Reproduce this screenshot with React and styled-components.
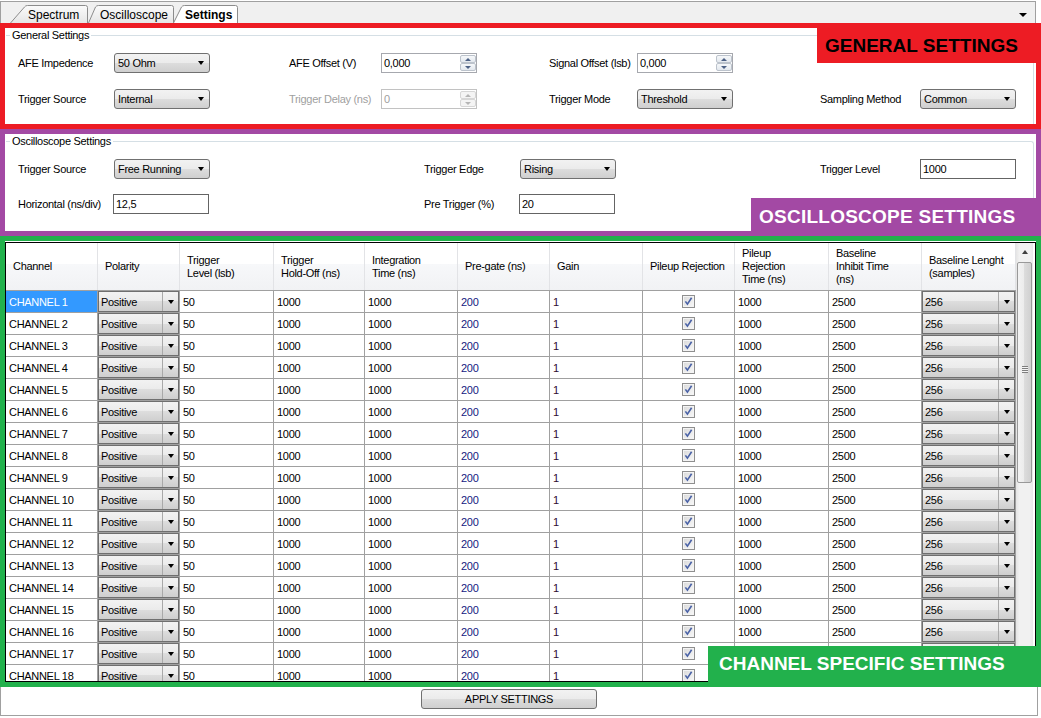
import React from "react";
import styled, { createGlobalStyle } from "styled-components";

const FONT = `"Liberation Sans", Arial, Helvetica, sans-serif`;
const VISTA = "linear-gradient(#f2f2f2 0%, #ebebeb 50%, #dddddd 50%, #cfcfcf 100%)";

const GlobalStyle = createGlobalStyle`
  *, *::before, *::after { box-sizing: border-box; }
  html, body { margin: 0; padding: 0; background: #ffffff; }
  body { font-family: ${FONT}; font-size: 11px; letter-spacing: -0.3px; color: #000; }
`;

const Page = styled.div`
  width: 1041px;
  height: 718px;
  display: flex;
  flex-direction: column;
  overflow: hidden;
  background: #fff;
`;

/* ---------- tab strip ---------- */
const TabStrip = styled.div`
  margin-top: 1px;
  width: 1036px;
  height: 22px;
  border: 1px solid #a0a0a0;
  border-bottom: none;
  background: #f0f0f0;
  display: flex;
  align-items: flex-end;
  padding-left: 9px;
`;

const TabItem = styled.div`
  position: relative;
  z-index: ${(p) => (p.$active ? 3 : 1)};
  width: ${(p) => p.$w}px;
  height: 18px;
  margin-left: ${(p) => p.$ml || 0}px;
  padding-left: ${(p) => p.$pl}px;
  padding-top: 1px;
  display: flex;
  align-items: center;
  font-size: 12px;
  letter-spacing: 0;
  font-weight: ${(p) => (p.$active ? 700 : 400)};
  white-space: nowrap;
`;

const TabShape = styled.svg`
  position: absolute;
  left: 0;
  top: 0;
  z-index: -1;
`;

const MenuArrow = styled.span`
  align-self: flex-start;
  margin: 11px 8px 0 auto;
  width: 0;
  height: 0;
  border-left: 4px solid transparent;
  border-right: 4px solid transparent;
  border-top: 4px solid #000;
`;

function Tab({ label, w, slant, pl, ml, active, id }) {
  const H = 18;
  const d = `M0.5,${H} L${slant - 1.5},2 Q${slant - 0.5},0.5 ${slant + 1.5},0.5 L${w - 2.5},0.5 Q${w - 0.5},0.5 ${w - 0.5},2.5 L${w - 0.5},${H}`;
  return (
    <TabItem $w={w} $pl={pl} $ml={ml} $active={active}>
      <TabShape width={w} height={H} viewBox={`0 0 ${w} ${H}`}>
        <defs>
          <linearGradient id={id} x1="0" y1="0" x2="0" y2="1">
            <stop offset="0" stopColor={active ? "#ffffff" : "#fbfbfb"} />
            <stop offset="1" stopColor={active ? "#ffffff" : "#e6e6e6"} />
          </linearGradient>
        </defs>
        <path d={d} fill={`url(#${id})`} stroke="#8c8c8c" strokeWidth="1" />
      </TabShape>
      {label}
    </TabItem>
  );
}

/* ---------- annotated sections ---------- */
const Section = styled.section`
  position: relative;
  flex-shrink: 0;
  height: ${(p) => p.$h}px;
  border: 5px solid ${(p) => p.$color};
  overflow: hidden;
  display: flex;
  flex-direction: column;
`;

const Badge = styled.div`
  position: absolute;
  right: 0;
  ${(p) => (p.$top ? "top: 0;" : "bottom: 0;")}
  z-index: 5;
  width: ${(p) => p.$w}px;
  height: ${(p) => p.$h}px;
  background: ${(p) => p.$bg};
  color: ${(p) => p.$fg};
  font: bold 19px ${FONT};
  letter-spacing: ${(p) => p.$ls || 0}px;
  display: flex;
  align-items: center;
  padding-left: ${(p) => p.$pad}px;
  padding-top: ${(p) => p.$pt || 0}px;
  white-space: nowrap;
`;

const Group = styled.fieldset`
  margin: 0 2px 0 1px;
  padding: 0;
  min-width: 0;
  flex: 1;
  border: 1px solid #d5dfe5;
  border-left: none;
  border-bottom: none;
  border-top-right-radius: 3px;
`;

const Legend = styled.legend`
  margin-left: 4px;
  padding: 0 2px;
  line-height: 14px;
  font-size: 11px;
`;

const FormGrid = styled.div`
  display: grid;
  grid-template-columns: ${(p) => p.$cols};
  grid-auto-rows: 20px;
  row-gap: ${(p) => p.$gap}px;
  align-items: center;
  padding: 11px 0 0 12px;
`;

const Label = styled.span`
  white-space: nowrap;
  color: ${(p) => (p.$disabled ? "#a0a0a0" : "#000")};
`;

const Empty = styled.span``;

const Combo = styled.div`
  width: 96px;
  height: 20px;
  border: 1px solid #707070;
  border-radius: 3px;
  background: ${VISTA};
  display: flex;
  align-items: center;
  justify-content: space-between;
  padding: 0 5px 0 3px;
  white-space: nowrap;
`;

const DropArrow = styled.span`
  width: 0;
  height: 0;
  border-left: 3.5px solid transparent;
  border-right: 3.5px solid transparent;
  border-top: 4px solid #000;
`;

const Numeric = styled.div`
  width: 96px;
  height: 20px;
  border: 1px solid ${(p) => (p.$disabled ? "#c2c2c2" : "#a6a8ae")};
  background: #fff;
  display: flex;
  color: ${(p) => (p.$disabled ? "#a0a0a0" : "#000")};
`;

const NumValue = styled.span`
  flex: 1;
  padding-left: 2px;
  display: flex;
  align-items: center;
`;

const Spin = styled.div`
  width: 16px;
  padding: 1px 0;
  display: flex;
  flex-direction: column;
`;

const SpinBtn = styled.div`
  flex: 1;
  border: 1px solid ${(p) => (p.$disabled ? "#d6d6d6" : "#bcc3cc")};
  border-radius: 2px;
  background: ${(p) => (p.$disabled ? "#f4f4f4" : "linear-gradient(#f6f8fa, #e3e8ee)")};
  display: flex;
  align-items: center;
  justify-content: center;
`;

const SpinArrow = styled.span`
  width: 0;
  height: 0;
  border-left: 3px solid transparent;
  border-right: 3px solid transparent;
  ${(p) => (p.$up ? "border-bottom" : "border-top")}: 3px solid ${(p) => (p.$disabled ? "#b5b5b5" : "#4d6185")};
`;

const TextBox = styled.div`
  width: 96px;
  height: 20px;
  border: 1px solid #646464;
  background: #fff;
  padding-left: 2px;
  display: flex;
  align-items: center;
  margin-left: ${(p) => p.$shift || 0}px;
`;

function Dropdown({ value }) {
  return (
    <Combo>
      <span>{value}</span>
      <DropArrow />
    </Combo>
  );
}

function NumericUpDown({ value, disabled }) {
  return (
    <Numeric $disabled={disabled}>
      <NumValue>{value}</NumValue>
      <Spin>
        <SpinBtn $disabled={disabled}>
          <SpinArrow $up $disabled={disabled} />
        </SpinBtn>
        <SpinBtn $disabled={disabled}>
          <SpinArrow $disabled={disabled} />
        </SpinBtn>
      </Spin>
    </Numeric>
  );
}

/* ---------- data grid ---------- */
const COLS = "92px 82px 94px 91px 93px 92px 93px 92px 94px 93px 94px";

const GridWrap = styled.div`
  margin-top: 1px;
  height: 440px;
  border: 1px solid #000;
  display: flex;
  overflow: hidden;
  background: #fff;
`;

const GridBody = styled.div`
  width: 1010px;
  flex-shrink: 0;
  display: flex;
  flex-direction: column;
  overflow: hidden;
`;

const HeaderRow = styled.div`
  display: grid;
  grid-template-columns: ${COLS};
  height: 48px;
  flex-shrink: 0;
  border-bottom: 1px solid #a0a0a0;
`;

const HeaderCell = styled.div`
  border-right: 1px solid #e2e3e6;
  background: linear-gradient(#ffffff 0%, #ffffff 45%, #f7f8fa 45%, #f1f2f4 100%);
  padding-left: 7px;
  display: flex;
  align-items: center;
  white-space: pre-line;
  line-height: 13px;
`;

const Row = styled.div`
  display: grid;
  grid-template-columns: ${COLS};
  height: 22px;
  flex-shrink: 0;
`;

const Cell = styled.div`
  border-right: 1px solid #a0a0a0;
  border-bottom: 1px solid #a0a0a0;
  padding-left: ${(p) => (p.$flush ? 0 : 3)}px;
  display: flex;
  align-items: center;
  justify-content: ${(p) => (p.$center ? "center" : "flex-start")};
  white-space: nowrap;
  overflow: hidden;
  background: ${(p) => (p.$sel ? "#3399ff" : "#fff")};
  color: ${(p) => (p.$sel ? "#fff" : p.$color || "#000")};
`;

const CellCombo = styled.div`
  flex: 1;
  align-self: stretch;
  display: flex;
  border: 1px solid #6f6f6f;
  background: ${VISTA};
`;

const CellComboText = styled.span`
  flex: 1;
  padding-left: 2px;
  display: flex;
  align-items: center;
`;

const CellComboBtn = styled.span`
  width: 16px;
  border-left: 1px solid #a9a9a9;
  display: flex;
  align-items: center;
  justify-content: center;
`;

const ScrollBar = styled.div`
  width: 17px;
  flex-shrink: 0;
  display: flex;
  flex-direction: column;
  background: linear-gradient(to right, #e4e4e4, #f1f1f1 20%, #f1f1f1 80%, #e9e9e9);
`;

const ScrollBtn = styled.div`
  height: 17px;
  display: flex;
  align-items: center;
  justify-content: center;
`;

const UpArrow = styled.span`
  width: 0;
  height: 0;
  border-left: 3.5px solid transparent;
  border-right: 3.5px solid transparent;
  border-bottom: 4px solid #404040;
`;

const Thumb = styled.div`
  margin: 2px 0 0 1px;
  width: 15px;
  height: 221px;
  border: 1px solid #999999;
  border-radius: 2px;
  background: linear-gradient(to right, #f3f3f3 0%, #ebebeb 50%, #dcdcdc 50%, #d0d0d0 100%);
  display: flex;
  align-items: center;
  justify-content: center;
`;

const Grip = styled.span`
  width: 6px;
  height: 7px;
  margin-top: -6px;
  background: repeating-linear-gradient(#7e7e7e 0 1px, #f4f4f4 1px 2px);
`;

function CheckIcon() {
  return (
    <svg width="13" height="13" viewBox="0 0 13 13">
      <defs>
        <linearGradient id="cbfill" x1="0" y1="0" x2="1" y2="1">
          <stop offset="0" stopColor="#dcdcdc" />
          <stop offset="1" stopColor="#f6f6f6" />
        </linearGradient>
      </defs>
      <rect x="0.5" y="0.5" width="12" height="12" fill="#f4f4f4" stroke="#8f8f8f" />
      <rect x="2" y="2" width="9" height="9" fill="url(#cbfill)" />
      <path d="M3.4 6.4 L5.4 9.2 L9.6 2.8" fill="none" stroke="#4a62a6" strokeWidth="1.6" />
    </svg>
  );
}

/* ---------- footer ---------- */
const Footer = styled.div`
  width: 1038px;
  height: 29px;
  flex-shrink: 0;
  border: 1px solid #a0a0a0;
  border-top: none;
  padding: 2px 0 0 420px;
`;

const Button = styled.button`
  width: 176px;
  height: 20px;
  border: 1px solid #707070;
  border-radius: 3px;
  background: ${VISTA};
  font: 11px ${FONT};
  letter-spacing: -0.3px;
  color: #000;
  padding: 0;
`;

const HEADERS = [
  "Channel",
  "Polarity",
  "Trigger\nLevel (lsb)",
  "Trigger\nHold-Off (ns)",
  "Integration\nTime (ns)",
  "Pre-gate (ns)",
  "Gain",
  "Pileup Rejection",
  "Pileup\nRejection\nTime (ns)",
  "Baseline\nInhibit Time\n(ns)",
  "Baseline Lenght\n(samples)",
];

const CHANNELS = Array.from({ length: 18 }, (_, i) => ({
  name: `CHANNEL ${i + 1}`,
  polarity: "Positive",
  level: "50",
  holdoff: "1000",
  integration: "1000",
  pregate: "200",
  gain: "1",
  pileupTime: "1000",
  inhibit: "2500",
  baseline: "256",
}));

function ComboCell({ value }) {
  return (
    <Cell $flush>
      <CellCombo>
        <CellComboText>{value}</CellComboText>
        <CellComboBtn>
          <DropArrow />
        </CellComboBtn>
      </CellCombo>
    </Cell>
  );
}

export default function App() {
  return (
    <Page>
      <GlobalStyle />
      <TabStrip>
        <Tab id="t1" label="Spectrum" w={78} slant={16} pl={18} />
        <Tab id="t2" label="Oscilloscope" w={86} slant={9} pl={12} />
        <Tab id="t3" label="Settings" w={65} slant={10} pl={12} ml={-1} active />
        <MenuArrow />
      </TabStrip>

      <Section $h={106} $color="#ed1c24">
        <Badge $top $w={219} $h={35} $bg="#ed1c24" $fg="#000" $pad={8}>
          GENERAL SETTINGS
        </Badge>
        <Group>
          <Legend>General Settings</Legend>
          <FormGrid $cols="96px 175px 92px 168px 88px 183px 100px 96px" $gap={16}>
            <Label>AFE Impedence</Label>
            <Dropdown value="50 Ohm" />
            <Label>AFE Offset (V)</Label>
            <NumericUpDown value="0,000" />
            <Label>Signal Offset (lsb)</Label>
            <NumericUpDown value="0,000" />
            <Empty />
            <Empty />

            <Label>Trigger Source</Label>
            <Dropdown value="Internal" />
            <Label $disabled>Trigger Delay (ns)</Label>
            <NumericUpDown value="0" disabled />
            <Label>Trigger Mode</Label>
            <Dropdown value="Threshold" />
            <Label>Sampling Method</Label>
            <Dropdown value="Common" />
          </FormGrid>
        </Group>
      </Section>

      <Section $h={107} $color="#a349a4">
        <Badge $w={285} $h={33} $bg="#a349a4" $fg="#fff" $pad={8} $pt={4} $ls={0.25}>
          OSCILLOSCOPE SETTINGS
        </Badge>
        <Group>
          <Legend>Oscilloscope Settings</Legend>
          <FormGrid $cols="96px 310px 96px 300px 100px 96px" $gap={15}>
            <Label>Trigger Source</Label>
            <Dropdown value="Free Running" />
            <Label>Trigger Edge</Label>
            <Dropdown value="Rising" />
            <Label>Trigger Level</Label>
            <TextBox>1000</TextBox>

            <Label>Horizontal (ns/div)</Label>
            <TextBox $shift={-1}>12,5</TextBox>
            <Label>Pre Trigger (%)</Label>
            <TextBox $shift={-1}>20</TextBox>
            <Empty />
            <Empty />
          </FormGrid>
        </Group>
      </Section>

      <Section $h={451} $color="#22b14c">
        <Badge $w={328} $h={36} $bg="#22b14c" $fg="#fff" $pad={11}>
          CHANNEL SPECIFIC SETTINGS
        </Badge>
        <GridWrap>
          <GridBody>
            <HeaderRow>
              {HEADERS.map((h) => (
                <HeaderCell key={h}>{h}</HeaderCell>
              ))}
            </HeaderRow>
            {CHANNELS.map((c, i) => (
              <Row key={c.name}>
                <Cell $sel={i === 0}>{c.name}</Cell>
                <ComboCell value={c.polarity} />
                <Cell>{c.level}</Cell>
                <Cell>{c.holdoff}</Cell>
                <Cell>{c.integration}</Cell>
                <Cell $color="#14207f">{c.pregate}</Cell>
                <Cell $color="#2e0a30">{c.gain}</Cell>
                <Cell $center $flush>
                  <CheckIcon />
                </Cell>
                <Cell>{c.pileupTime}</Cell>
                <Cell>{c.inhibit}</Cell>
                <ComboCell value={c.baseline} />
              </Row>
            ))}
          </GridBody>
          <ScrollBar>
            <ScrollBtn>
              <UpArrow />
            </ScrollBtn>
            <Thumb>
              <Grip />
            </Thumb>
          </ScrollBar>
        </GridWrap>
      </Section>

      <Footer>
        <Button>APPLY SETTINGS</Button>
      </Footer>
    </Page>
  );
}
